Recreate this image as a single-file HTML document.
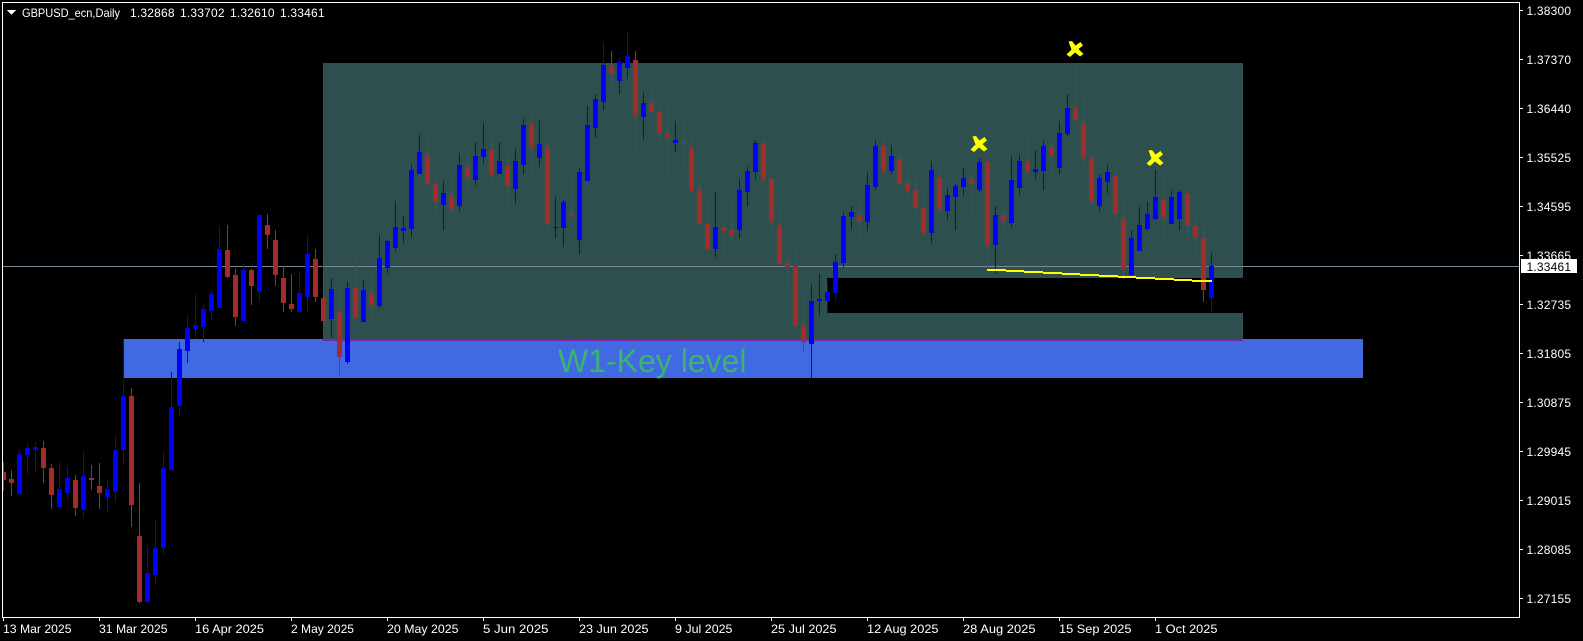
<!DOCTYPE html>
<html lang="en">
<head>
<meta charset="utf-8">
<title>GBPUSD_ecn,Daily</title>
<style>
html,body{margin:0;padding:0;background:#000;width:1583px;height:641px;overflow:hidden}
svg{display:block;position:absolute;left:0;top:0}
text{font-family:"Liberation Sans",Arial,sans-serif;font-size:12px;fill:#fff}
.p{letter-spacing:.2px}
</style>
</head>
<body>
<svg width="1583" height="641" viewBox="0 0 1583 641" xmlns="http://www.w3.org/2000/svg">
<rect width="1583" height="641" fill="#000"/>
<g shape-rendering="crispEdges">
<rect x="124" y="339" width="1239" height="39" fill="#4169e1"/>
<path fill="#2f4f4f" d="M323 63H1243V278H827V313H1243V339H323Z"/>
<rect x="323" y="339" width="920" height="2" fill="#7b22b8"/>
</g>
<text x="558" y="372" style="font-size:32px;fill:#3cb371">W1-Key level</text>
<g shape-rendering="crispEdges">
<rect x="3" y="266" width="1516" height="1" fill="#778899"/>
<path fill="none" stroke="#0000ff" stroke-width="1" d="M19.5 449V495M27.5 443V475M35.5 442V473M59.5 462V509M67.5 466V501M83.5 452V518M107.5 480V513M115.5 435V502M123.5 339V465M147.5 546V602M155.5 520V585M163.5 451V555M171.5 372V471M179.5 342V417M187.5 316V363M195.5 294V338M203.5 304V342M211.5 291V319M219.5 226V308M243.5 264V321M259.5 214V302M299.5 271V312M307.5 236V312M331.5 278V338M347.5 282V364M363.5 280V322M379.5 235V308M387.5 240V273M395.5 201V251M403.5 216V243M411.5 164V237M419.5 135V174M443.5 181V230M459.5 153V211M475.5 142V185M483.5 123V164M499.5 142V174M515.5 149V204M523.5 119V174M539.5 120V167M555.5 197V238M563.5 200V247M579.5 168V254M587.5 106V181M595.5 94V138M603.5 42V110M619.5 58V94M627.5 32V79M643.5 92V140M675.5 121V152M715.5 192V257M739.5 179V238M747.5 167V206M755.5 140V179M811.5 284V378M819.5 274V316M827.5 282V313M835.5 254V301M843.5 212V267M851.5 206V229M867.5 172V231M875.5 140V190M891.5 145V174M931.5 161V243M947.5 188V220M955.5 184V230M963.5 168V196M979.5 158V192M995.5 206V274M1011.5 156V227M1019.5 155V195M1035.5 150V179M1043.5 141V190M1059.5 121V174M1067.5 94V136M1099.5 174V211M1107.5 165V193M1131.5 230V276M1139.5 207V251M1147.5 202V231M1155.5 170V220M1171.5 191V224M1179.5 190V230M1211.5 253V312"/>
<path fill="none" stroke="#0000ff" stroke-width="5" d="M19.5 454V494M27.5 448V455M35.5 447V450M59.5 489V507M67.5 478V493M83.5 476V510M107.5 489V497M115.5 450V492M123.5 396V450M147.5 573V602M155.5 548V575M163.5 468V548M171.5 407V470M179.5 349V406M187.5 328V351M195.5 325V329M203.5 309V327M211.5 294V311M219.5 249V308M243.5 270V321M259.5 215V292M299.5 293V312M307.5 254V297M331.5 289V319M347.5 288V362M363.5 290V322M379.5 258V306M387.5 241V268M395.5 227V248M403.5 228V231M411.5 170V229M419.5 152V174M443.5 193V205M459.5 165V206M475.5 156V180M483.5 149V157M499.5 161V174M515.5 161V189M523.5 125V165M539.5 144V158M555.5 227V228M563.5 202V228M579.5 172V240M587.5 125V181M595.5 99V128M603.5 65V102M619.5 62V81M627.5 56V68M643.5 103V117M675.5 140V143M715.5 227V249M739.5 190V230M747.5 171V192M755.5 143V172M811.5 301V344M819.5 299V301M827.5 292V301M835.5 262V293M843.5 216V263M851.5 212V217M867.5 185V222M875.5 146V187M891.5 156V171M931.5 170V233M947.5 195V211M955.5 186V197M963.5 178V187M979.5 162V190M995.5 215V245M1011.5 180V223M1019.5 161V188M1035.5 169V172M1043.5 146V171M1059.5 133V168M1067.5 108V134M1099.5 178V206M1107.5 172V182M1131.5 238V275M1139.5 225V251M1147.5 214V229M1155.5 197V219M1171.5 197V224M1179.5 192V219M1211.5 266V298"/>
<path fill="none" stroke="#a52a2a" stroke-width="1" d="M3.5 462V491M11.5 470V496M43.5 441V483M51.5 464V509M75.5 475V516M91.5 465V490M99.5 463V509M131.5 388V527M139.5 483V603M227.5 225V278M235.5 269V326M251.5 269V305M267.5 214V249M275.5 230V286M283.5 266V312M291.5 274V312M315.5 249V302M323.5 260V325M339.5 290V376M355.5 258V318M371.5 273V317M427.5 139V185M435.5 173V212M451.5 179V213M467.5 154V190M491.5 140V182M507.5 151V209M531.5 115V177M547.5 143V230M571.5 179V217M611.5 51V89M635.5 51V153M651.5 85V114M659.5 101V146M667.5 107V172M683.5 122V168M691.5 139V195M699.5 182V226M707.5 202V250M723.5 225V252M731.5 198V241M763.5 138V184M771.5 178V230M779.5 209V264M787.5 256V287M795.5 245V329M803.5 300V352M859.5 197V239M883.5 135V175M899.5 150V185M907.5 168V197M915.5 179V214M923.5 194V236M939.5 170V214M971.5 176V214M987.5 160V270M1003.5 206V230M1027.5 137V176M1051.5 142V173M1075.5 65V123M1083.5 99V168M1091.5 153V205M1115.5 170V225M1123.5 202V279M1163.5 179V238M1187.5 191V242M1195.5 217V254M1203.5 227V302"/>
<path fill="none" stroke="#a52a2a" stroke-width="5" d="M3.5 472V480M11.5 479V483M43.5 448V468M51.5 468V495M75.5 480V508M91.5 478V480M99.5 486V493M131.5 396V505M139.5 536V602M227.5 250V277M235.5 275V317M251.5 270V286M267.5 225V235M275.5 240V275M283.5 278V303M291.5 304V309M315.5 259V297M323.5 298V321M339.5 312V357M355.5 288V318M371.5 293V305M427.5 155V184M435.5 184V202M451.5 195V210M467.5 167V177M491.5 150V175M507.5 166V186M531.5 124V147M547.5 147V224M571.5 213V216M611.5 65V74M635.5 60V115M651.5 103V112M659.5 112V133M667.5 133V137M683.5 143V144M691.5 148V191M699.5 189V224M707.5 224V249M723.5 228V231M731.5 230V235M763.5 143V180M771.5 179V221M779.5 225V264M787.5 263V267M795.5 266V326M803.5 325V342M859.5 215V222M883.5 146V171M899.5 159V184M907.5 183V191M915.5 190V208M923.5 208V233M939.5 178V210M971.5 179V184M987.5 162V245M1003.5 215V221M1027.5 161V172M1051.5 147V156M1075.5 108V120M1083.5 123V157M1091.5 158V202M1115.5 176V214M1123.5 219V269M1163.5 200V217M1187.5 194V226M1195.5 226V237M1203.5 238V290"/>
<path fill="none" stroke="#ffff00" stroke-width="2" d="M987 270H1006M1006 271H1024M1024 272H1043M1043 273H1062M1062 274H1080M1080 275H1099M1099 276H1118M1118 277H1136M1136 278H1155M1155 279H1174M1174 280H1192M1192 281H1212"/>
<rect x="0" y="0" width="2" height="641" fill="#000"/>
<path fill="none" stroke="#fff" stroke-width="1" d="M2.5 618V2.5H1519.5V617.5H2.5"/>
<path fill="none" stroke="#fff" stroke-width="1" d="M1520 10.5h3M1520 59.5h3M1520 108.5h3M1520 157.5h3M1520 206.5h3M1520 255.5h3M1520 304.5h3M1520 353.5h3M1520 402.5h3M1520 451.5h3M1520 500.5h3M1520 549.5h3M1520 598.5h3M3.5 618v3M99.5 618v3M195.5 618v3M291.5 618v3M387.5 618v3M483.5 618v3M579.5 618v3M675.5 618v3M771.5 618v3M867.5 618v3M963.5 618v3M1059.5 618v3M1155.5 618v3"/>
<path fill="#fff" d="M7 10H16L11.5 15Z"/>
</g>
<g fill="#ffff00">
<path transform="translate(979 144)" d="M-6.5 -7.5L-3 -8L.5 -3.5L5.5 -7L8 -3.5L3.5 0L8.5 5L5 7.5L0 3.5L-5 8L-8.5 5.5L-3.5 .5Z"/>
<path transform="translate(1075 49)" d="M-6.5 -7.5L-3 -8L.5 -3.5L5.5 -7L8 -3.5L3.5 0L8.5 5L5 7.5L0 3.5L-5 8L-8.5 5.5L-3.5 .5Z"/>
<path transform="translate(1155 158)" d="M-6.5 -7.5L-3 -8L.5 -3.5L5.5 -7L8 -3.5L3.5 0L8.5 5L5 7.5L0 3.5L-5 8L-8.5 5.5L-3.5 .5Z"/>
</g>
<text x="22" y="17" textLength="98" lengthAdjust="spacingAndGlyphs">GBPUSD_ecn,Daily</text>
<g class="p">
<text x="130" y="17">1.32868</text>
<text x="180" y="17">1.33702</text>
<text x="230" y="17">1.32610</text>
<text x="280" y="17">1.33461</text>
<text x="1526.5" y="15">1.38300</text>
<text x="1526.5" y="64">1.37370</text>
<text x="1526.5" y="113">1.36440</text>
<text x="1526.5" y="162">1.35525</text>
<text x="1526.5" y="211">1.34595</text>
<text x="1526.5" y="260">1.33665</text>
<text x="1526.5" y="309">1.32735</text>
<text x="1526.5" y="358">1.31805</text>
<text x="1526.5" y="407">1.30875</text>
<text x="1526.5" y="456">1.29945</text>
<text x="1526.5" y="505">1.29015</text>
<text x="1526.5" y="554">1.28085</text>
<text x="1526.5" y="603">1.27155</text>
</g>
<rect x="1521" y="259" width="56" height="14" fill="#fff" shape-rendering="crispEdges"/>
<text x="1526.5" y="271" class="p" style="fill:#000">1.33461</text>
<text x="3" y="633" textLength="68.5" lengthAdjust="spacingAndGlyphs">13 Mar 2025</text>
<text x="99" y="633" textLength="68.5" lengthAdjust="spacingAndGlyphs">31 Mar 2025</text>
<text x="195" y="633" textLength="69" lengthAdjust="spacingAndGlyphs">16 Apr 2025</text>
<text x="291" y="633" textLength="63" lengthAdjust="spacingAndGlyphs">2 May 2025</text>
<text x="387" y="633" textLength="71.5" lengthAdjust="spacingAndGlyphs">20 May 2025</text>
<text x="483" y="633" textLength="65.5" lengthAdjust="spacingAndGlyphs">5 Jun 2025</text>
<text x="579" y="633" textLength="69.5" lengthAdjust="spacingAndGlyphs">23 Jun 2025</text>
<text x="675" y="633" textLength="57.5" lengthAdjust="spacingAndGlyphs">9 Jul 2025</text>
<text x="771" y="633" textLength="65.5" lengthAdjust="spacingAndGlyphs">25 Jul 2025</text>
<text x="867" y="633" textLength="71.5" lengthAdjust="spacingAndGlyphs">12 Aug 2025</text>
<text x="963" y="633" textLength="72.5" lengthAdjust="spacingAndGlyphs">28 Aug 2025</text>
<text x="1059" y="633" textLength="72.5" lengthAdjust="spacingAndGlyphs">15 Sep 2025</text>
<text x="1155" y="633" textLength="62.5" lengthAdjust="spacingAndGlyphs">1 Oct 2025</text>
</svg>
</body>
</html>
